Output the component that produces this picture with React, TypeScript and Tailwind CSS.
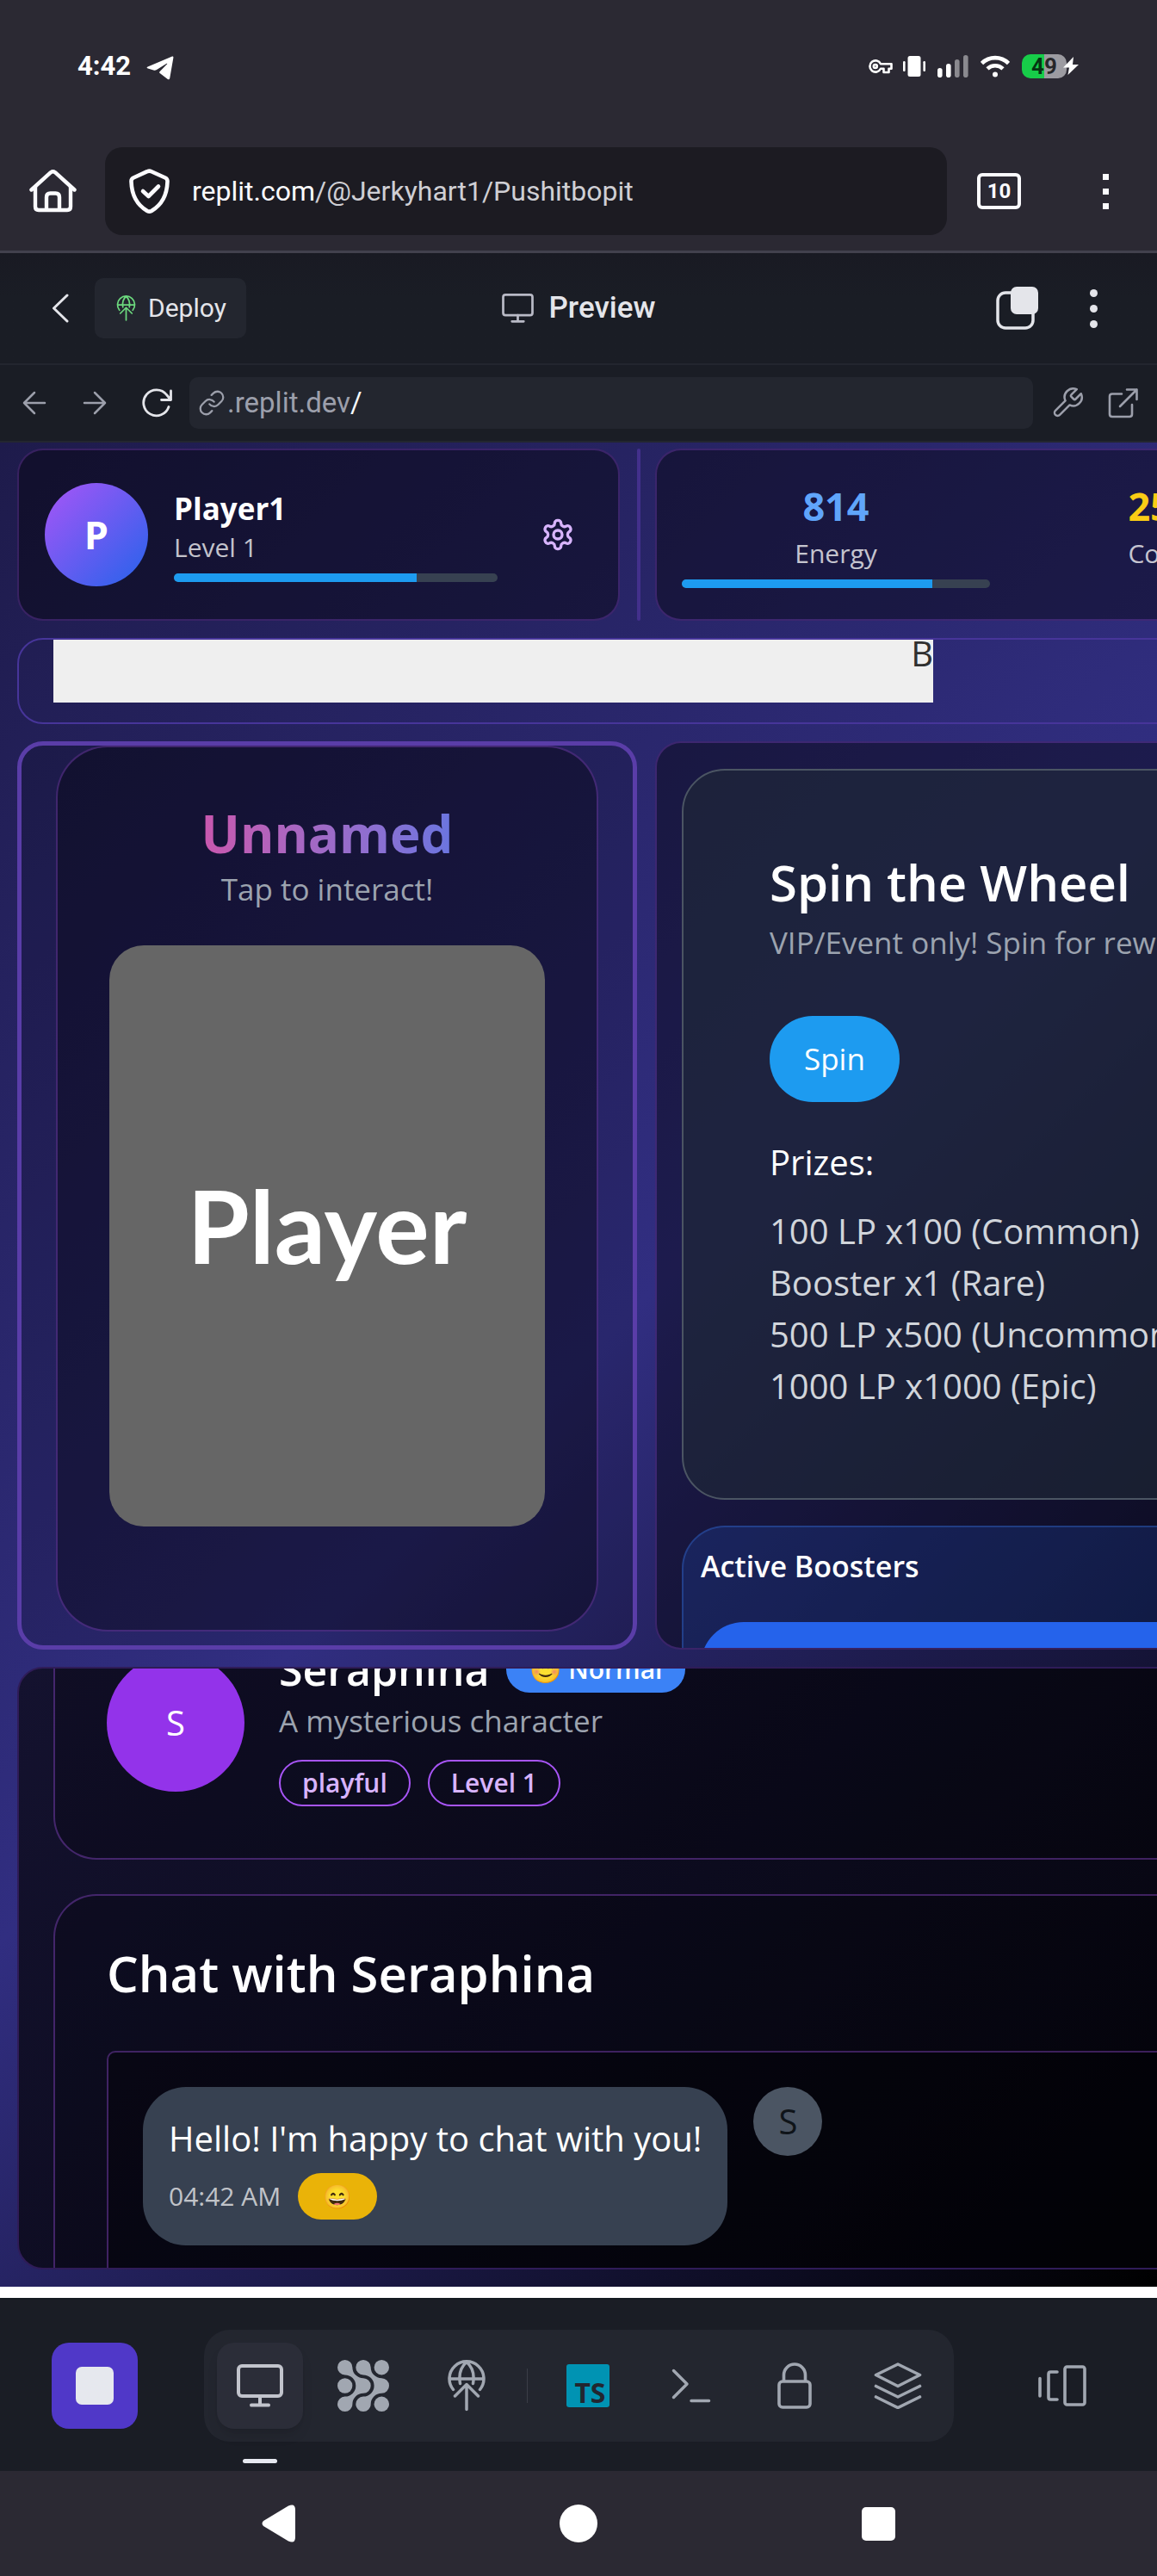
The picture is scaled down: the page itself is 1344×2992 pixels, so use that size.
import React from "react";

type IconProps = { className?: string };

const MonitorIcon = ({ className }: IconProps) => (
  <svg viewBox="0 0 54 50" fill="none" stroke="currentColor" strokeWidth="4" strokeLinecap="round" className={className} aria-hidden="true">
    <rect x="2" y="2" width="50" height="35" rx="4" />
    <path d="M27 37v10M17 47.500h20" />
  </svg>
);

const GlobeUpIcon = ({ className }: IconProps) => (
  <svg viewBox="0 0 44 60" fill="none" stroke="currentColor" strokeWidth="3.500" strokeLinecap="round" className={className} aria-hidden="true">
    <path d="M6.500 34.500A20 20 0 1 1 37.500 34.500M2.500 22h39M22 2.500C15.500 8 12.500 16 14.500 27.500M22 2.500C28.500 8 31.500 16 29.500 27.500" />
    <path d="M22 57.500V29.500M8.500 42L22 28.500L35.500 42" strokeLinejoin="round" />
  </svg>
);

const AgentIcon = ({ className }: IconProps) => {
  const d =
    "M8.700 0A8.700 8.700 0 0 1 17.400 8.700A12.600 12.600 0 0 0 30 21.300A8.700 8.700 0 0 1 30 38.700A12.600 12.600 0 0 0 17.400 51.300A8.700 8.700 0 1 1 8.700 42.600A12.600 12.600 0 0 0 21.300 30A12.600 12.600 0 0 0 8.700 17.400A8.700 8.700 0 0 1 8.700 0Z";
  return (
    <svg viewBox="0 0 60 60" fill="currentColor" className={className} aria-hidden="true">
      <path d={d} />
      <path d={d} transform="translate(21.300 0)" />
      <circle cx="51.300" cy="8.700" r="8.700" />
      <circle cx="8.700" cy="30" r="8.700" />
      <circle cx="51.300" cy="51.300" r="8.700" />
    </svg>
  );
};

function StatusBar() {
  return (
    <div className="flex h-[153px] items-center justify-between pl-[90px] pr-[90px] text-white">
      <div className="flex items-center gap-[18px]">
        <span className="text-[31px] leading-9 font-bold">4:42</span>
        <svg viewBox="0 0 32 28" className="mt-1 h-7 w-8" fill="currentColor" aria-hidden="true">
          <path d="M30 .6C31 .2 31.600 .8 31.400 2L27.300 25.500C27 27.300 26 27.700 24.500 26.700L16 20.300C14.800 19.400 14.900 18.700 15.900 17.700L24 9.500C24.600 8.900 24 8.600 23.200 9.100L12 16.100C10.600 17 9.700 17 8.300 16.600L1.800 14.600C.2 14 .2 13.200 1.700 12.500Z" />
        </svg>
      </div>
      <div className="flex items-center">
        <svg viewBox="0 0 28 18" className="mr-[12px] h-[18px] w-7" fill="none" stroke="currentColor" strokeWidth="2.600" aria-hidden="true">
          <path d="M14 6.200A6.600 6.600 0 1 0 14 11.800H17.500V16H23.500V11.800H26.500V6.200Z" strokeLinejoin="round" />
          <circle cx="7.800" cy="9" r="2" />
        </svg>
        <svg viewBox="0 0 26 26" className="mr-[14px] h-[26px] w-[26px]" fill="currentColor" aria-hidden="true">
          <rect x="5.500" y="1" width="15" height="24" rx="2.500" />
          <rect x="0" y="7" width="2.600" height="12" rx="1.200" />
          <rect x="23.400" y="7" width="2.600" height="12" rx="1.200" />
        </svg>
        <svg viewBox="0 0 36 26" className="mr-[14px] h-[26px] w-9" fill="currentColor" aria-hidden="true">
          <rect x="0" y="15" width="5.600" height="11" rx="2.800" />
          <rect x="10" y="10" width="5.600" height="16" rx="2.800" />
          <rect x="20" y="5" width="5.600" height="21" rx="2.800" opacity=".45" />
          <rect x="30" y="0" width="5.600" height="26" rx="2.800" opacity=".45" />
        </svg>
        <svg viewBox="0 0 34 26" className="mr-[14px] h-[26px] w-[34px]" fill="none" stroke="currentColor" strokeWidth="4.600" aria-hidden="true">
          <path d="M1.500 9.500A22 22 0 0 1 32.500 9.500M8 15.800A13 13 0 0 1 26 15.800" />
          <circle cx="17" cy="22.600" r="3" fill="currentColor" stroke="none" />
        </svg>
        <div className="flex items-center">
          <span className="flex h-7 w-[52px] items-center justify-center rounded-[10px] bg-linear-to-r from-[#17cd49] from-50% to-[#9c9ba1] to-50% text-[26px] leading-7 font-bold text-black/75">
            49
          </span>
          <svg viewBox="0 0 19 22" className="-ml-1 h-[22px] w-[19px]" fill="currentColor" aria-hidden="true">
            <path d="M12 0L0 12.500H7L5.500 21L18 9H11Z" />
          </svg>
        </div>
      </div>
    </div>
  );
}

function BrowserBar() {
  return (
    <div className="flex h-[141px] items-center border-b-[3px] border-[#42414d] pl-[34px] pr-10 text-[#fbfbfe]">
      <button aria-label="Home">
        <svg viewBox="0 0 55 50" className="h-[50px] w-[55px]" fill="none" stroke="currentColor" strokeWidth="4.400" strokeLinecap="round" strokeLinejoin="round" aria-hidden="true">
          <path d="M2.500 23.500L25 3.200Q27.500 1.500 30 3.200L52.500 23.500" />
          <path d="M7 20V43Q7 47 11 47H44Q48 47 48 43V20" />
          <path d="M20 46V32Q20 27.500 24.500 27.500H30.500Q35 27.500 35 32V46" />
        </svg>
      </button>
      <div className="ml-[33px] flex h-[102px] min-w-0 flex-1 items-center rounded-[20px] bg-[#1c1b22] pl-7">
        <svg viewBox="0 0 47 52" className="h-[52px] w-[47px] shrink-0" fill="none" stroke="currentColor" strokeWidth="4.600" strokeLinecap="round" strokeLinejoin="round" aria-hidden="true">
          <path d="M21 3.200Q23.500 2 26 3.200L42 10.500Q44.700 11.800 44.500 15C44 31 37 42.500 26 49Q23.500 50.300 21 49C10 42.500 3 31 2.500 15Q2.300 11.800 5 10.500Z" />
          <path d="M16 26L22.500 32L34 20.500" />
        </svg>
        <label htmlFor="page-url" className="ml-[26px] text-[32px] leading-10">replit.com</label>
        <input id="page-url" defaultValue="/@Jerkyhart1/Pushitbopit" className="min-w-0 flex-1 bg-transparent text-[32px] leading-10 text-[#cfcfd4] outline-none" />
      </div>
      <button aria-label="Tabs" className="ml-[35px] flex h-[42px] w-[51px] items-center justify-center rounded-md border-4 border-current text-[24px] leading-6 font-bold">10</button>
      <button aria-label="Browser menu" className="ml-[78px] flex w-10 flex-col items-center gap-[10px]">
        <span className="size-[7px] bg-current" />
        <span className="size-[7px] bg-current" />
        <span className="size-[7px] bg-current" />
      </button>
    </div>
  );
}

function WorkspaceHeader() {
  return (
    <header className="grid h-[130px] grid-cols-[1fr_auto_1fr] items-center border-b-2 border-[#23262f] bg-linear-to-b from-[#191a23] to-[#1a1d25] to-40% text-[#e4e5ea]">
      <div className="flex items-center pl-[60px]">
        <button aria-label="Back">
          <svg viewBox="0 0 20 34" className="h-[34px] w-5" fill="none" stroke="currentColor" strokeWidth="3" strokeLinecap="round" strokeLinejoin="round" aria-hidden="true">
            <path d="M18 2L2.500 17L18 32" />
          </svg>
        </button>
        <button className="ml-[30px] flex h-[70px] items-center gap-[14px] rounded-[10px] bg-[#23262f] pl-[25px] pr-[23px] text-[30px] leading-10">
          <GlobeUpIcon className="h-[30px] w-[23px] text-[#6cd97e]" />
          Deploy
        </button>
      </div>
      <h1 className="flex items-center gap-[18px] text-[35px] leading-10 font-medium">
        <MonitorIcon className="h-[34px] w-[37px] text-[#b9bac6]" />
        Preview
      </h1>
      <div className="flex items-center justify-end pr-[54px]">
        <button aria-label="Duplicate">
          <svg viewBox="0 0 50 50" className="size-[50px]" aria-hidden="true">
            <rect x="2" y="7" width="41" height="41" rx="9" fill="none" stroke="currentColor" strokeWidth="3.500" />
            <rect x="17" y="0" width="32" height="32" rx="7" fill="currentColor" />
          </svg>
        </button>
        <button aria-label="More" className="ml-[43px] flex w-10 flex-col items-center gap-[9px]">
          <span className="size-[9px] rounded-full bg-current" />
          <span className="size-[9px] rounded-full bg-current" />
          <span className="size-[9px] rounded-full bg-current" />
        </button>
      </div>
    </header>
  );
}

function PreviewToolbar() {
  return (
    <div className="flex h-[90px] items-center border-b-2 border-[#23262f] bg-[#1a1d25] pl-[26px] pr-[21px] text-[#9c9fab]">
      <button aria-label="Go back">
        <svg viewBox="0 0 28 28" className="size-7" fill="none" stroke="currentColor" strokeWidth="2.500" strokeLinecap="round" strokeLinejoin="round" aria-hidden="true">
          <path d="M26 14H2M14 2L2 14L14 26" />
        </svg>
      </button>
      <button aria-label="Go forward" className="ml-[42px]">
        <svg viewBox="0 0 28 28" className="size-7" fill="none" stroke="currentColor" strokeWidth="2.500" strokeLinecap="round" strokeLinejoin="round" aria-hidden="true">
          <path d="M2 14H26M14 2L26 14L14 26" />
        </svg>
      </button>
      <button aria-label="Reload" className="ml-10 text-[#e4e5ea]">
        <svg viewBox="0 0 36 36" className="size-9" fill="none" stroke="currentColor" strokeWidth="2.800" strokeLinecap="round" strokeLinejoin="round" aria-hidden="true">
          <path d="M32 22.500A15 15 0 1 1 29.500 8.500L34.500 14.500M34.500 4V14.500H23.500" />
        </svg>
      </button>
      <div className="ml-5 flex h-[60px] min-w-0 flex-1 items-center rounded-[10px] bg-[#23262f] pl-[10px]">
        <svg viewBox="0 0 24 24" className="size-8 shrink-0" fill="none" stroke="currentColor" strokeWidth="1.700" strokeLinecap="round" strokeLinejoin="round" aria-hidden="true">
          <path d="M10 13a5 5 0 0 0 7.540.540l3-3a5 5 0 0 0-7.070-7.070l-1.720 1.710" />
          <path d="M14 11a5 5 0 0 0-7.540-.540l-3 3a5 5 0 0 0 7.070 7.070l1.710-1.710" />
        </svg>
        <label htmlFor="preview-path" className="ml-[2px] text-[33px] leading-10">.replit.dev</label>
        <input id="preview-path" defaultValue="/" className="min-w-0 flex-1 bg-transparent text-[33px] leading-10 text-[#f5f9fc] outline-none" />
      </div>
      <button aria-label="Developer tools" className="ml-5">
        <svg viewBox="0 0 24 24" className="size-10" fill="none" stroke="currentColor" strokeWidth="1.500" strokeLinecap="round" strokeLinejoin="round" aria-hidden="true">
          <path d="M14.700 6.300a1 1 0 0 0 0 1.400l1.600 1.600a1 1 0 0 0 1.400 0l3.770-3.770a6 6 0 0 1-7.940 7.940l-6.910 6.910a2.120 2.120 0 0 1-3-3l6.910-6.910a6 6 0 0 1 7.940-7.940l-3.760 3.760z" />
        </svg>
      </button>
      <button aria-label="Open in new tab" className="ml-[27px]">
        <svg viewBox="0 0 36 36" className="size-9" fill="none" stroke="currentColor" strokeWidth="2.600" strokeLinecap="round" strokeLinejoin="round" aria-hidden="true">
          <path d="M16 7.500H5Q2 7.500 2 10.500V31Q2 34 5 34H25Q28 34 28 31V20M22 2.500H33.500V14M33.500 2.500L14 22" />
        </svg>
      </button>
    </div>
  );
}

function Meter({ label, value, fill }: { label: string; value: number; fill: string }) {
  return (
    <div role="progressbar" aria-label={label} aria-valuenow={value} className="mt-[10px] h-[10px] w-full overflow-hidden rounded-full bg-[#374151]">
      <div className={`h-full bg-[#1d9bf0] ${fill}`} />
    </div>
  );
}

function PlayerCard() {
  return (
    <section className="flex w-[700px] items-center gap-[30px] rounded-[30px] border-2 border-[#a855f7]/25 bg-black/40 p-[30px]">
      <div className="flex size-[120px] shrink-0 items-center justify-center rounded-full bg-[linear-gradient(135deg,#a855f7,#2563eb)] text-[45px] font-bold text-white">P</div>
      <div className="min-w-0 flex-1">
        <h2 className="text-[35px] leading-[50px] font-bold text-white">Player1</h2>
        <p className="text-[30px] leading-10 text-white/75">Level 1</p>
        <Meter label="Level progress" value={75} fill="w-[75%]" />
      </div>
      <button aria-label="Settings" className="flex size-20 items-center justify-center text-[#d8b4fe]">
        <svg viewBox="0 0 24 24" className="size-10" fill="none" stroke="currentColor" strokeWidth="2" strokeLinecap="round" strokeLinejoin="round" aria-hidden="true">
          <path d="M12.220 2h-.440a2 2 0 0 0-2 2v.180a2 2 0 0 1-1 1.730l-.430.250a2 2 0 0 1-2 0l-.150-.080a2 2 0 0 0-2.730.730l-.220.380a2 2 0 0 0 .730 2.730l.150.100a2 2 0 0 1 1 1.720v.510a2 2 0 0 1-1 1.740l-.150.090a2 2 0 0 0-.730 2.730l.220.380a2 2 0 0 0 2.730.730l.150-.080a2 2 0 0 1 2 0l.430.250a2 2 0 0 1 1 1.730V20a2 2 0 0 0 2 2h.440a2 2 0 0 0 2-2v-.180a2 2 0 0 1 1-1.730l.430-.250a2 2 0 0 1 2 0l.150.080a2 2 0 0 0 2.730-.730l.220-.390a2 2 0 0 0-.730-2.730l-.150-.080a2 2 0 0 1-1-1.740v-.500a2 2 0 0 1 1-1.740l.150-.090a2 2 0 0 0 .730-2.730l-.220-.380a2 2 0 0 0-2.730-.730l-.150.080a2 2 0 0 1-2 0l-.430-.250a2 2 0 0 1-1-1.730V4a2 2 0 0 0-2-2z" />
          <circle cx="12" cy="12" r="3" />
        </svg>
      </button>
    </section>
  );
}

function StatsCard() {
  return (
    <section className="ml-[17px] grid flex-1 grid-cols-[358px_358px_1fr] gap-5 rounded-[30px] border-2 border-[#a855f7]/25 bg-black/40 px-[29px] py-[30px] text-center">
      <div>
        <p className="text-[45px] leading-[70px] font-bold text-[#60a5fa]">814</p>
        <p className="text-[30px] leading-10 text-white/75">Energy</p>
        <Meter label="Energy" value={81} fill="w-[81.400%]" />
      </div>
      <div>
        <p className="text-[45px] leading-[70px] font-bold text-[#facc15]">250</p>
        <p className="text-[30px] leading-10 text-white/75">Coins</p>
      </div>
    </section>
  );
}

function CharacterPanel() {
  return (
    <section className="w-[720px] rounded-[30px] border-[5px] border-[#5a3da8] bg-black/15 px-10">
      <div className="rounded-[60px] border-2 border-[#a855f7]/30 bg-black/35 px-[60px] pt-[60px] pb-[120px] text-center">
        <h2 className="mx-auto w-fit bg-linear-to-r from-[#c957ae] to-[#6a75e0] bg-clip-text text-[60px] leading-[80px] font-bold text-transparent">Unnamed</h2>
        <p className="text-[35px] leading-[50px] text-[#9ca3af]">Tap to interact!</p>
        <div className="mt-10 flex aspect-[3/4] items-center justify-center rounded-[40px] bg-[#666] pb-6 font-[Lato] text-[117px] leading-none font-bold text-white">Player</div>
      </div>
    </section>
  );
}

const prizes = ["100 LP x100 (Common)", "Booster x1 (Rare)", "500 LP x500 (Uncommon)", "1000 LP x1000 (Epic)"];

function RewardsPanel() {
  return (
    <section className="ml-[21px] flex flex-1 flex-col gap-[30px] overflow-hidden rounded-[30px] border-2 border-[#a855f7]/25 bg-black/40 px-[29px] pt-[30px]">
      <div className="shrink-0 rounded-[50px] border-2 border-[#4b5563] bg-[#1f2937]/60 p-[100px]">
        <h2 className="text-[58px] leading-[60px] font-semibold text-white">Spin the Wheel</h2>
        <p className="mt-[15px] text-[35px] leading-[50px] whitespace-nowrap text-[#9ca3af]">VIP/Event only! Spin for rewards.</p>
        <button className="mt-[60px] flex h-[100px] items-center rounded-full bg-[#1d9bf0] px-10 text-[35px] leading-[50px] font-medium text-white">Spin</button>
        <p className="mt-10 text-[40px] leading-[60px] text-white">Prizes:</p>
        <ul className="mt-5 text-[40px] leading-[60px] whitespace-nowrap text-[#d1d5db]">
          {prizes.map((p) => (
            <li key={p}>{p}</li>
          ))}
        </ul>
      </div>
      <div className="shrink-0 rounded-[50px] border-2 border-[#3b82f6]/30 bg-[#2563eb]/18 p-5">
        <h3 className="text-[34px] leading-[50px] font-semibold text-white">Active Boosters</h3>
        <div className="mt-10 h-40 rounded-[50px] bg-[#2563eb]" />
      </div>
    </section>
  );
}

function ChatPanel() {
  return (
    <section className="h-[700px] overflow-hidden rounded-[30px] border-2 border-[#2f1c58] bg-[linear-gradient(135deg,#14122f,#0c0b1e_40%,#000)] px-10">
      <div className="-mt-24 flex items-center gap-10 rounded-[50px] border-2 border-[#a855f7]/35 bg-black/20 p-[60px]">
        <div className="flex size-40 shrink-0 items-center justify-center rounded-full bg-[#9333ea] text-[40px] leading-[60px] text-white">S</div>
        <div>
          <div className="flex items-center gap-5">
            <h2 className="text-[50px] leading-[70px] font-semibold text-white">Seraphina</h2>
            <span className="flex h-[54px] items-center rounded-full bg-[#3b82f6] px-[27px] text-[30px] leading-10 font-semibold text-white">😊 Normal</span>
          </div>
          <p className="text-[35px] leading-[50px] text-[#9ca3af]">A mysterious character</p>
          <div className="mt-5 flex gap-5 text-[30px] leading-10 font-semibold text-[#d8b4fe]">
            <span className="flex h-[54px] items-center rounded-full border-2 border-[#a855f7] px-[25px]">playful</span>
            <span className="flex h-[54px] items-center rounded-full border-2 border-[#a855f7] px-[25px]">Level 1</span>
          </div>
        </div>
      </div>
      <div className="mt-10 rounded-[50px] border-2 border-[#a855f7]/35 bg-black/20 p-[60px]">
        <h2 className="text-[58px] leading-[60px] font-semibold text-white">Chat with Seraphina</h2>
        <div className="mt-[60px] flex min-h-[500px] items-start gap-[30px] rounded-[10px] border-2 border-[#a855f7]/35 bg-black/30 p-10">
          <div className="rounded-[50px] bg-[#374151] p-[30px]">
            <p className="text-[40px] leading-[60px] whitespace-nowrap text-white">Hello! I'm happy to chat with you!</p>
            <div className="mt-[10px] flex items-center gap-5">
              <span className="text-[30px] leading-10 text-white/70">04:42 AM</span>
              <span className="flex h-[54px] w-[92px] items-center justify-center rounded-full bg-[#eab308] text-[27px] leading-10">😄</span>
            </div>
          </div>
          <div className="flex size-20 shrink-0 items-center justify-center rounded-full bg-[#4b5563] text-[40px] text-[#0f1419]">S</div>
        </div>
      </div>
    </section>
  );
}

function GamePreview() {
  return (
    <main className="overflow-hidden bg-[linear-gradient(135deg,#1e1b4b,#312e81,#000)] font-['Open_Sans',sans-serif]">
      <div className="flex min-w-[1940px] flex-col gap-5 px-5 pt-[7px] pb-5">
        <div className="flex h-[200px]">
          <PlayerCard />
          <div className="ml-5 w-1 rounded-full bg-[#43308c]" />
          <StatsCard />
        </div>
        <div className="h-[100px] rounded-[30px] border-2 border-[#47359a] px-10">
          <button className="flex h-[73px] w-[1022px] items-start justify-end bg-[#efefef] text-[40px] leading-8 text-[#303030]">B</button>
        </div>
        <div className="flex h-[1055px]">
          <CharacterPanel />
          <RewardsPanel />
        </div>
        <ChatPanel />
      </div>
    </main>
  );
}

function DockButton({ label, active, children }: { label: string; active?: boolean; children: React.ReactNode }) {
  return (
    <button
      aria-label={label}
      className={`relative flex size-[100px] items-center justify-center rounded-[20px] ${active ? "bg-[#2b2d38] text-[#c2c4cc] shadow-lg" : ""}`}
    >
      {children}
      {active && <span className="absolute top-[135px] h-[5px] w-10 rounded-full bg-[#e6e8f0]" />}
    </button>
  );
}

function Dock() {
  return (
    <footer className="flex h-[201px] items-center justify-between border-t-2 border-[#141a20] bg-[#1a1d25] px-[60px] text-[#a1a7b1]">
      <button aria-label="Stop" className="flex size-[100px] items-center justify-center rounded-[20px] bg-[#5038c8]">
        <span className="size-11 rounded-[7px] bg-[#e6e8ee]" />
      </button>
      <div className="flex items-center gap-5 rounded-[30px] bg-[#23262f] p-[15px]">
        <DockButton label="Preview" active><MonitorIcon className="h-[50px] w-[54px]" /></DockButton>
        <DockButton label="Agent"><AgentIcon className="size-[60px]" /></DockButton>
        <DockButton label="Deployments"><GlobeUpIcon className="h-[60px] w-11" /></DockButton>
        <span className="h-10 w-px bg-[#3a3d48]" />
        <DockButton label="TypeScript">
          <span className="flex size-[50px] items-end justify-end rounded-[3px] bg-[#0093b3] pr-1 font-['Noto_Sans',sans-serif] text-[32px] leading-[34px] font-bold text-[#23262f]">TS</span>
        </DockButton>
        <DockButton label="Shell">
          <svg viewBox="0 0 46 40" className="h-10 w-[46px]" fill="none" stroke="currentColor" strokeWidth="3.500" strokeLinecap="round" strokeLinejoin="round" aria-hidden="true">
            <path d="M2.500 2.500L18 18L2.500 33.500M23 37.500H43.500" />
          </svg>
        </DockButton>
        <DockButton label="Secrets">
          <svg viewBox="0 0 40 54" className="h-[54px] w-10" fill="none" stroke="currentColor" strokeWidth="3.600" strokeLinejoin="round" aria-hidden="true">
            <rect x="2" y="22" width="36" height="30" rx="4" />
            <path d="M7.500 22V14.500A12.500 12.500 0 0 1 32.500 14.500V22" />
          </svg>
        </DockButton>
        <DockButton label="Layers">
          <svg viewBox="0 0 56 54" className="h-[54px] w-14" fill="none" stroke="currentColor" strokeWidth="3.600" strokeLinecap="round" strokeLinejoin="round" aria-hidden="true">
            <path d="M28 2L53.500 14.500L28 27.500L2.500 14.500ZM2.500 27.500L28 40L53.500 27.500M2.500 40L28 52.500L53.500 40" />
          </svg>
        </DockButton>
      </div>
      <button aria-label="Switch tabs" className="flex size-[100px] items-center justify-center">
        <svg viewBox="0 0 56 48" className="h-12 w-14" fill="none" stroke="currentColor" strokeWidth="3.600" strokeLinecap="round" strokeLinejoin="round" aria-hidden="true">
          <rect x="31" y="2" width="23" height="44" rx="2.500" />
          <path d="M22 8H14.500Q12 8 12 10.500V37.500Q12 40 14.500 40H22M2 15.500V36" />
        </svg>
      </button>
    </footer>
  );
}

function SystemNav() {
  return (
    <nav className="grid h-[122px] grid-cols-3 place-items-center px-[150px] text-white" aria-label="System">
      <button aria-label="Back">
        <svg viewBox="0 0 40 44" className="h-11 w-10" fill="currentColor" aria-hidden="true">
          <path d="M2 19L31 1.500Q39 -2 39 6V38Q39 46 31 42.500L2 25Q-1 22 2 19Z" />
        </svg>
      </button>
      <button aria-label="Home" className="size-11 rounded-full bg-white" />
      <button aria-label="Recents" className="size-[39px] rounded-[5px] bg-white" />
    </nav>
  );
}

export default function App() {
  return (
    <div className="bg-[#2b2933] font-[Roboto,sans-serif]">
      <StatusBar />
      <BrowserBar />
      <WorkspaceHeader />
      <PreviewToolbar />
      <GamePreview />
      <div className="h-[13px] bg-white" />
      <Dock />
      <SystemNav />
    </div>
  );
}
